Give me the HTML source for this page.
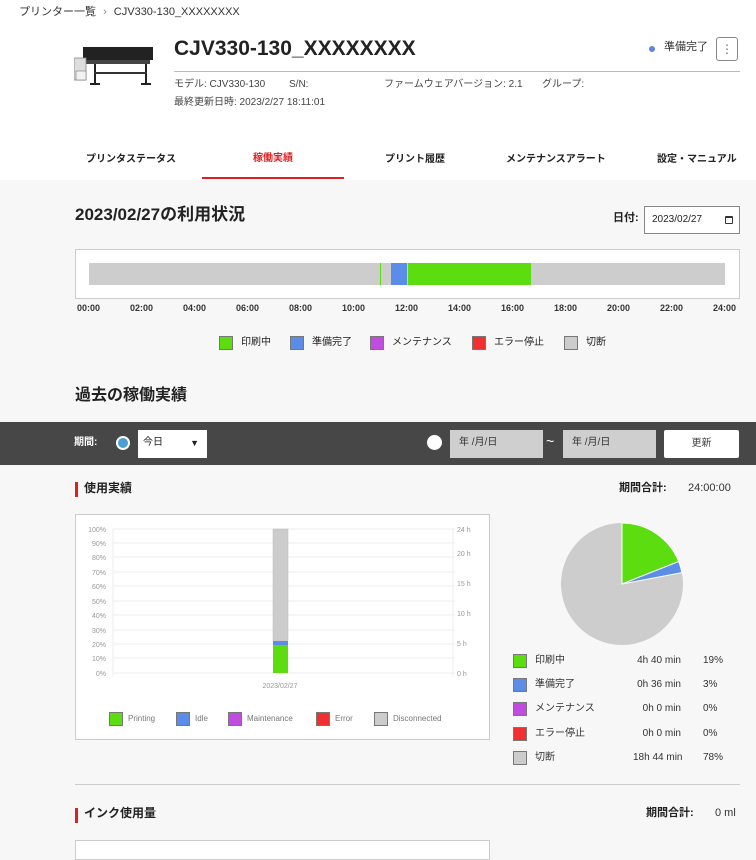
<!DOCTYPE html>
<html><head><meta charset="utf-8">
<style>
*{margin:0;padding:0;box-sizing:border-box}
body{width:756px;height:850px;overflow:hidden;background:#f7f7f7;font-family:"Liberation Sans","Noto Sans CJK JP",sans-serif;color:#222;position:relative;line-height:1.45}
.a{position:absolute;white-space:nowrap;line-height:1.45}
.top{position:absolute;left:0;top:0;width:756px;height:180px;background:#fff}
.sq{position:absolute;width:14px;height:14px;border:1px solid #777}
</style></head><body>
<div class="top"></div>
<div class="a" style="left:19px;top:5px;font-size:11px;color:#333">プリンター一覧 <span style="color:#888;margin:0 4px">›</span> CJV330-130_XXXXXXXX</div>
<svg class="a" style="left:74px;top:44px" width="92" height="44">
<rect x="9" y="3" width="70" height="13" fill="#222"/>
<rect x="10" y="16" width="66" height="4" fill="#444"/>
<rect x="0" y="14" width="12" height="22" fill="#ddd" stroke="#888" stroke-width=".8"/>
<rect x="2" y="27" width="10" height="9" fill="#f2f2f2" stroke="#777" stroke-width=".6"/>
<rect x="20" y="20" width="2" height="20" fill="#222"/>
<rect x="71" y="20" width="2" height="20" fill="#222"/>
<rect x="20" y="28" width="53" height="2" fill="#333"/>
<rect x="16" y="39" width="10" height="2" fill="#222"/>
<rect x="67" y="39" width="10" height="2" fill="#222"/>
</svg>
<div class="a" style="left:174px;top:34px;font-size:21px;font-weight:bold;color:#222">CJV330-130_XXXXXXXX</div>
<div class="a" style="left:649px;top:46px;width:6px;height:6px;border-radius:50%;background:#5b86e5"></div>
<div class="a" style="left:664px;top:40px;font-size:11px;color:#333">準備完了</div>
<div class="a" style="left:716px;top:37px;width:22px;height:24px;border:1px solid #888;border-radius:3px;font-size:12px;color:#666;text-align:center;line-height:22px">⋮</div>
<div class="a" style="left:174px;top:71px;width:566px;height:1px;background:#bbb"></div>
<div class="a" style="left:174px;top:78px;font-size:10px;color:#444">モデル: CJV330-130</div>
<div class="a" style="left:289px;top:78px;font-size:10px;color:#444">S/N:</div>
<div class="a" style="left:384px;top:78px;font-size:10px;color:#444">ファームウェアバージョン: 2.1</div>
<div class="a" style="left:542px;top:78px;font-size:10px;color:#444">グループ:</div>
<div class="a" style="left:174px;top:96px;font-size:10px;color:#444">最終更新日時: 2023/2/27 18:11:01</div>
<div class="a" style="left:86px;top:153px;font-size:10px;font-weight:bold">プリンタステータス</div>
<div class="a" style="left:253px;top:152px;font-size:10px;font-weight:bold;color:#e02020">稼働実績</div>
<div class="a" style="left:385px;top:153px;font-size:10px;font-weight:bold">プリント履歴</div>
<div class="a" style="left:506px;top:153px;font-size:10px;font-weight:bold">メンテナンスアラート</div>
<div class="a" style="left:657px;top:153px;font-size:10px;font-weight:bold">設定・マニュアル</div>
<div class="a" style="left:202px;top:177px;width:142px;height:2px;background:#e02020"></div>

<div class="a" style="left:75px;top:203px;font-size:17px;font-weight:bold">2023/02/27の利用状況</div>
<div class="a" style="left:613px;top:211px;font-size:11px;font-weight:bold">日付:</div>
<div class="a" style="left:644px;top:206px;width:96px;height:28px;border:1px solid #888;background:#fff;font-size:10px;padding:6px 0 0 7px">2023/02/27<span style="position:absolute;right:6px;top:9px;width:8px;height:8px;border:1.5px solid #333;border-top-width:2.5px;border-radius:1px"></span></div>

<div class="a" style="left:75px;top:249px;width:665px;height:50px;border:1px solid #ccc;background:#fff"></div>
<div class="a" style="left:89px;top:263px;width:636px;height:22px;background:#cdcdcd"></div>
<div class="a" style="left:380px;top:263px;width:1px;height:22px;background:#5bdd10"></div>
<div class="a" style="left:391px;top:263px;width:16px;height:22px;background:#5b8de8"></div>
<div class="a" style="left:408px;top:263px;width:123px;height:22px;background:#5bdd10"></div>
<div class="a" style="left:77px;top:302px;width:670px;font-size:9px;font-weight:bold;color:#333">
<span class="a" style="left:0">00:00</span><span class="a" style="left:53px">02:00</span><span class="a" style="left:106px">04:00</span><span class="a" style="left:159px">06:00</span><span class="a" style="left:212px">08:00</span><span class="a" style="left:265px">10:00</span><span class="a" style="left:318px">12:00</span><span class="a" style="left:371px">14:00</span><span class="a" style="left:424px">16:00</span><span class="a" style="left:477px">18:00</span><span class="a" style="left:530px">20:00</span><span class="a" style="left:583px">22:00</span><span class="a" style="left:636px">24:00</span></div>
<div class="sq" style="left:219px;top:336px;background:#5bdd10"></div><div class="a" style="left:241px;top:336px;font-size:10px">印刷中</div>
<div class="sq" style="left:290px;top:336px;background:#5b8de8"></div><div class="a" style="left:312px;top:336px;font-size:10px">準備完了</div>
<div class="sq" style="left:370px;top:336px;background:#c04de0"></div><div class="a" style="left:392px;top:336px;font-size:10px">メンテナンス</div>
<div class="sq" style="left:472px;top:336px;background:#f03030"></div><div class="a" style="left:494px;top:336px;font-size:10px">エラー停止</div>
<div class="sq" style="left:564px;top:336px;background:#ccc"></div><div class="a" style="left:586px;top:336px;font-size:10px">切断</div>

<div class="a" style="left:75px;top:384px;font-size:16px;font-weight:bold">過去の稼働実績</div>
<div class="a" style="left:0;top:422px;width:756px;height:43px;background:#474747"></div>
<div class="a" style="left:74px;top:436px;font-size:10px;font-weight:bold;color:#fff">期間:</div>
<div class="a" style="left:116px;top:436px;width:14px;height:14px;border-radius:50%;background:#4a9fd0;border:2px solid #fff"></div>
<div class="a" style="left:138px;top:430px;width:69px;height:28px;background:#fff;font-size:10px;padding:6px 0 0 5px">今日<span style="position:absolute;right:8px;top:7px;font-size:9px">▼</span></div>
<div class="a" style="left:427px;top:435px;width:15px;height:15px;border-radius:50%;background:#fff"></div>
<div class="a" style="left:450px;top:430px;width:93px;height:28px;background:#cfcfcf;font-size:10px;padding:6px 0 0 9px;color:#333">年 /月/日</div>
<div class="a" style="left:546px;top:431px;font-size:14px;color:#fff">~</div>
<div class="a" style="left:563px;top:430px;width:93px;height:28px;background:#cfcfcf;font-size:10px;padding:6px 0 0 9px;color:#333">年 /月/日</div>
<div class="a" style="left:664px;top:430px;width:75px;height:28px;background:#fff;border-radius:2px;font-size:10px;text-align:center;line-height:28px;color:#444">更新</div>

<div class="a" style="left:75px;top:482px;width:3px;height:15px;background:#e02020"></div>
<div class="a" style="left:84px;top:480px;font-size:12px;font-weight:bold">使用実績</div>
<div class="a" style="left:619px;top:481px;font-size:11px;font-weight:bold">期間合計:</div>
<div class="a" style="left:688px;top:481px;font-size:11px;color:#333">24:00:00</div>

<div class="a" style="left:75px;top:514px;width:415px;height:226px;border:1px solid #ccc;background:#fff"></div>
<svg class="a" style="left:75px;top:514px" width="415" height="226" font-family="Liberation Sans" font-size="7" fill="#999">
<g stroke="#eee" stroke-width="1">
<line x1="38" y1="15" x2="380" y2="15"/><line x1="38" y1="29" x2="380" y2="29"/><line x1="38" y1="43" x2="380" y2="43"/><line x1="38" y1="58" x2="380" y2="58"/><line x1="38" y1="72" x2="380" y2="72"/><line x1="38" y1="87" x2="380" y2="87"/><line x1="38" y1="101" x2="380" y2="101"/><line x1="38" y1="116" x2="380" y2="116"/><line x1="38" y1="130" x2="380" y2="130"/><line x1="38" y1="144" x2="380" y2="144"/><line x1="38" y1="159" x2="380" y2="159"/>
<line x1="38" y1="15" x2="38" y2="163"/><line x1="378" y1="15" x2="378" y2="163"/>
</g>
<g text-anchor="end"><text x="31" y="18">100%</text><text x="31" y="32">90%</text><text x="31" y="46">80%</text><text x="31" y="61">70%</text><text x="31" y="75">60%</text><text x="31" y="90">50%</text><text x="31" y="104">40%</text><text x="31" y="119">30%</text><text x="31" y="133">20%</text><text x="31" y="147">10%</text><text x="31" y="162">0%</text></g>
<text x="382" y="18">24 h</text><text x="382" y="42">20 h</text><text x="382" y="72">15 h</text><text x="382" y="102">10 h</text><text x="382" y="132">5 h</text><text x="382" y="162">0 h</text>
<rect x="198" y="15" width="15" height="112" fill="#ccc" stroke="#bbb" stroke-width=".5"/>
<rect x="198" y="127" width="15" height="4" fill="#5b8de8"/>
<rect x="198" y="131" width="15" height="28" fill="#5bdd10"/>
<text x="205" y="174" text-anchor="middle">2023/02/27</text>
</svg>
<div class="sq" style="left:109px;top:712px;background:#5bdd10"></div><div class="a" style="left:128px;top:713px;font-size:8px;color:#777">Printing</div>
<div class="sq" style="left:176px;top:712px;background:#5b8de8"></div><div class="a" style="left:195px;top:713px;font-size:8px;color:#777">Idle</div>
<div class="sq" style="left:228px;top:712px;background:#c04de0"></div><div class="a" style="left:247px;top:713px;font-size:8px;color:#777">Maintenance</div>
<div class="sq" style="left:316px;top:712px;background:#f03030"></div><div class="a" style="left:335px;top:713px;font-size:8px;color:#777">Error</div>
<div class="sq" style="left:374px;top:712px;background:#ccc"></div><div class="a" style="left:393px;top:713px;font-size:8px;color:#777">Disconnected</div>

<svg class="a" style="left:558px;top:520px" width="130" height="130">
<circle cx="64" cy="64" r="61" fill="#cdcdcd"/>
<path d="M64 64 L64 3 A61 61 0 0 1 120.7 41.5 Z" fill="#5bdd10" stroke="#fff" stroke-width="1"/>
<path d="M64 64 L120.7 41.5 A61 61 0 0 1 123.9 52.6 Z" fill="#5b8de8" stroke="#fff" stroke-width="1"/>
</svg>
<div style="position:absolute;left:513px;top:654px;font-size:10px;color:#333">
<div class="sq" style="left:0;top:0;background:#5bdd10"></div><span class="a" style="left:22px;top:0px">印刷中</span><span class="a" style="left:120px;top:0px;width:48px;text-align:right">4h 40 min</span><span class="a" style="left:190px;top:0px">19%</span>
<div class="sq" style="left:0;top:24px;background:#5b8de8"></div><span class="a" style="left:22px;top:24px">準備完了</span><span class="a" style="left:120px;top:24px;width:48px;text-align:right">0h 36 min</span><span class="a" style="left:190px;top:24px">3%</span>
<div class="sq" style="left:0;top:48px;background:#c04de0"></div><span class="a" style="left:22px;top:48px">メンテナンス</span><span class="a" style="left:120px;top:48px;width:48px;text-align:right">0h 0 min</span><span class="a" style="left:190px;top:48px">0%</span>
<div class="sq" style="left:0;top:73px;background:#f03030"></div><span class="a" style="left:22px;top:73px">エラー停止</span><span class="a" style="left:120px;top:73px;width:48px;text-align:right">0h 0 min</span><span class="a" style="left:190px;top:73px">0%</span>
<div class="sq" style="left:0;top:97px;background:#ccc"></div><span class="a" style="left:22px;top:97px">切断</span><span class="a" style="left:120px;top:97px;width:48px;text-align:right">18h 44 min</span><span class="a" style="left:190px;top:97px">78%</span>
</div>
<div class="a" style="left:75px;top:784px;width:665px;height:1px;background:#ccc"></div>
<div class="a" style="left:75px;top:808px;width:3px;height:15px;background:#e02020"></div>
<div class="a" style="left:84px;top:805px;font-size:12px;font-weight:bold">インク使用量</div>
<div class="a" style="left:646px;top:806px;font-size:11px;font-weight:bold">期間合計:</div>
<div class="a" style="left:715px;top:806px;font-size:11px;color:#333">0 ml</div>
<div class="a" style="left:75px;top:840px;width:415px;height:20px;border:1px solid #ccc;background:#fff"></div>
</body></html>
